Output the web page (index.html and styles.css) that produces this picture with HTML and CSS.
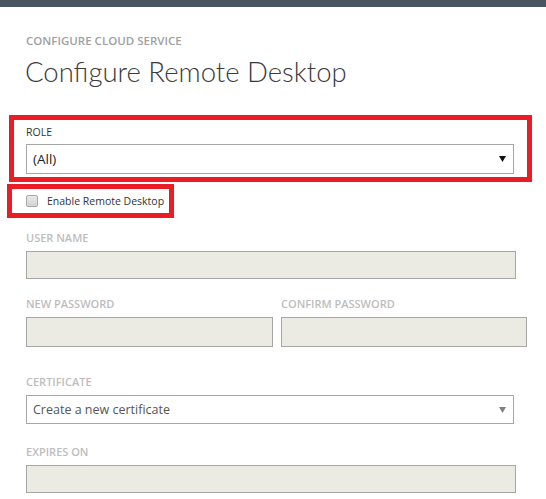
FILE: index.html
```html
<!DOCTYPE html>
<html>
<head>
<meta charset="utf-8">
<link rel="stylesheet" href="styles.css">
</head>
<body>
<div class="topbar"></div>
<div class="page">
  <div class="subtitle">CONFIGURE CLOUD SERVICE</div>
  <h1 class="title">Configure Remote Desktop</h1>

  <div class="redbox role-box">
    <div class="label dark">ROLE</div>
    <div class="select role-select">
      <span class="select-text">(All)</span>
      <svg class="arrow" width="7" height="6" viewBox="0 0 7 6"><polygon points="0,0 7,0 3.5,6" fill="#111"/></svg>
    </div>
  </div>

  <div class="redbox check-box">
    <span class="checkbox"></span>
    <span class="check-label">Enable Remote Desktop</span>
  </div>

  <div class="field f-user">
    <div class="label">USER NAME</div>
    <div class="input w-full"></div>
  </div>

  <div class="row f-pass">
    <div class="field">
      <div class="label">NEW PASSWORD</div>
      <div class="input w-half tall"></div>
    </div>
    <div class="field">
      <div class="label">CONFIRM PASSWORD</div>
      <div class="input w-half2 tall"></div>
    </div>
  </div>

  <div class="field f-cert">
    <div class="label">CERTIFICATE</div>
    <div class="select cert-select">
      <span class="select-text cert-text">Create a new certificate</span>
      <svg class="arrow" width="7" height="6" viewBox="0 0 7 6"><polygon points="0,0 7,0 3.5,6" fill="#808080"/></svg>
    </div>
  </div>

  <div class="field f-exp">
    <div class="label">EXPIRES ON</div>
    <div class="input w-full"></div>
  </div>
</div>
</body>
</html>
```

FILE: styles.css
```css
html, body {
  margin: 0;
  padding: 0;
  background: #ffffff;
  font-family: "Open Sans", "Noto Sans", sans-serif;
  overflow: hidden;
}

.topbar {
  height: 7px;
  background: #4a5560;
}

.page {
  padding: 0;
}

.subtitle {
  margin: 26px 0 0 26px;
  font-size: 11.5px;
  line-height: 16px;
  font-weight: 600;
  color: #a0a0a0;
}

.title {
  margin: 5px 0 0 25px;
  font-family: "Lato", "Open Sans", sans-serif;
  font-size: 27.5px;
  line-height: 36px;
  font-weight: 300;
  color: #3a3a3a;
}

.redbox {
  border: 5px solid #ec1c24;
  box-sizing: border-box;
}

.role-box {
  margin: 25px 0 0 9px;
  width: 523px;
  height: 67px;
  padding: 5px 0 0 12px;
}

.label {
  font-size: 11px;
  line-height: 14px;
  font-weight: 600;
  color: #bdbdbd;
  white-space: nowrap;
}

.label.dark {
  font-size: 10.5px;
  font-weight: 400;
  color: #333333;
}

.select {
  display: flex;
  align-items: center;
  justify-content: space-between;
  box-sizing: border-box;
  border: 1px solid #a6a6a6;
  background: #ffffff;
  padding: 0 7px 0 6px;
}

.role-select {
  margin-top: 5px;
  width: 488px;
  height: 30px;
}

.select-text {
  font-size: 13.5px;
  color: #222222;
}

.cert-text {
  font-size: 12.5px;
  color: #555555;
}

.arrow {
  display: block;
}

.check-box {
  margin: 2px 0 0 7px;
  width: 167px;
  height: 34px;
  display: flex;
  align-items: center;
  padding-left: 14px;
}

.checkbox {
  width: 10px;
  height: 10px;
  border: 1px solid #a8a8a8;
  border-radius: 2px;
  background: linear-gradient(#e8e8e8, #d4d4d4);
  flex: none;
}

.check-label {
  margin-left: 9px;
  font-size: 10.5px;
  color: #333333;
  white-space: nowrap;
}

.field {
  margin-left: 26px;
}

.row {
  display: flex;
  gap: 8px;
  margin-left: 26px;
}

.row .field {
  margin-left: 0;
}

.input {
  box-sizing: border-box;
  border: 1px solid #a6a6a6;
  background: #ebebe4;
  height: 28px;
  margin-top: 6px;
}

.input.tall {
  height: 30px;
  margin-top: 6px;
}

.w-full { width: 490px; }
.w-half { width: 247px; }
.w-half2 { width: 246px; }

.f-user { margin-top: 13px; }
.f-pass { margin-top: 18px; }
.f-cert { margin-top: 28px; }
.f-cert .cert-select {
  margin-top: 6px;
  width: 488px;
  height: 29px;
}
.f-exp { margin-top: 21px; }
```
